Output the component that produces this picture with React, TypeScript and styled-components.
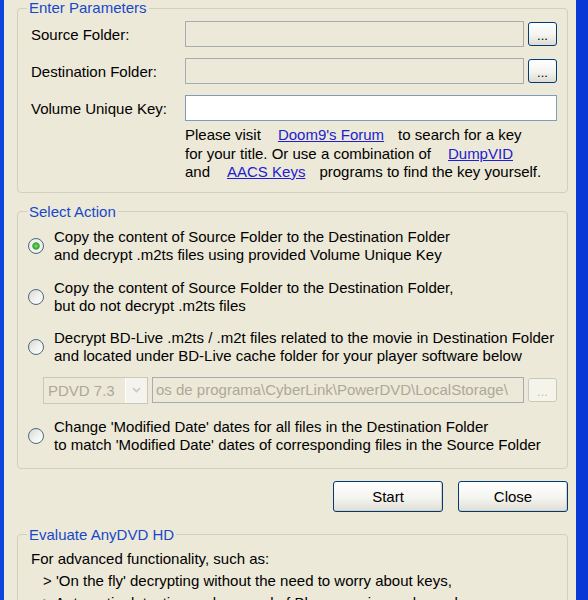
import React from 'react';
import styled, { createGlobalStyle } from 'styled-components';

const GlobalStyle = createGlobalStyle`
  html, body {
    margin: 0;
    padding: 0;
  }
  body {
    font-family: 'Liberation Sans', Arial, sans-serif;
    font-size: 15px;
    color: #000;
    overflow: hidden;
  }
`;

const Frame = styled.div`
  width: 588px;
  height: 600px;
  box-sizing: border-box;
  border-left: 4px solid #0b45de;
  border-right: 12px solid #0839d6;
  background: #ece9d8;
  overflow: hidden;
  padding: 0 8px 0 13px;
`;

const Group = styled.fieldset<{ $top?: number; $bottom?: number }>`
  margin: ${(p) => p.$top ?? 0}px 0 0;
  padding: 5px 10px ${(p) => p.$bottom ?? 10}px 13px;
  border: 1px solid #d0d0bf;
  border-radius: 4px;
  min-width: 0;
`;

const Legend = styled.legend`
  color: #1848c8;
  padding: 0 2px;
  margin-left: -4px;
  line-height: 16px;
`;

const FieldRow = styled.div`
  display: flex;
  align-items: center;
  height: 26px;

  & + & {
    margin-top: 11px;
  }
`;

const FieldLabel = styled.span`
  width: 154px;
  flex: none;
`;

const TextBox = styled.div<{ $disabled?: boolean }>`
  flex: 1;
  height: 26px;
  box-sizing: border-box;
  border: 1px solid ${(p) => (p.$disabled ? '#a5acb2' : '#7f9db9')};
  background: ${(p) => (p.$disabled ? '#ece9d8' : '#fff')};
  color: #aca899;
  padding: 0 3px;
  line-height: 24px;
  white-space: nowrap;
  overflow: hidden;
`;

const SmallButton = styled.button<{ $disabled?: boolean }>`
  width: 29px;
  height: 24px;
  margin-left: 4px;
  flex: none;
  padding: 0;
  font: inherit;
  font-size: 13px;
  line-height: 26px;
  color: ${(p) => (p.$disabled ? '#c0bdb0' : '#000')};
  border: 1px solid ${(p) => (p.$disabled ? '#cac8bb' : '#003c74')};
  border-radius: 3px;
  background: ${(p) =>
    p.$disabled ? '#f5f4ea' : 'linear-gradient(#fff 0%, #f3f3ef 55%, #dedcd2 100%)'};
`;

const Info = styled.div`
  margin: 5px 0 0 154px;
  line-height: 18.5px;
  white-space: nowrap;
`;

const Link = styled.a`
  color: #1c20d0;
  text-decoration: underline;
  margin: 0 14px 0 17px;
`;

const Option = styled.label<{ $gap?: number }>`
  display: flex;
  align-items: center;
  margin-left: -3px;
  line-height: 18px;
  margin-top: ${(p) => p.$gap ?? 0}px;
  white-space: nowrap;
`;

// XP style radio: bluish ring, soft fill, green dot when picked
const Radio = styled.span<{ $checked?: boolean }>`
  width: 16px;
  height: 16px;
  box-sizing: border-box;
  flex: none;
  margin-right: 10px;
  border-radius: 50%;
  border: 1.5px solid #4d6985;
  background: ${(p) =>
    p.$checked
      ? 'radial-gradient(circle, #7ee07a 0, #2ca52a 3.2px, #f6f6f2 4.2px, #e2e0d8 100%)'
      : 'linear-gradient(135deg, #d8d8d2 0%, #f2f2ee 55%, #fff 100%)'};
`;

const CacheRow = styled.div`
  display: flex;
  align-items: center;
  height: 27px;
  margin-top: 12px;
  padding-left: 12px;
`;

const Combo = styled.div`
  width: 105px;
  height: 27px;
  box-sizing: border-box;
  flex: none;
  display: flex;
  border: 1px solid #cac8bb;
  background: #ece9d8;
  color: #aca899;
  margin-right: 4px;
`;

const ComboText = styled.span`
  flex: 1;
  padding-left: 4px;
  line-height: 25px;
`;

const DropButton = styled.span`
  width: 21px;
  display: flex;
  align-items: center;
  justify-content: center;
  background: #f4f3ee;
  border-left: 1px solid #fff;
`;

const ButtonRow = styled.div`
  display: flex;
  justify-content: flex-end;
  gap: 15px;
  margin-top: 12px;
`;

const PushButton = styled.button`
  width: 110px;
  height: 31px;
  padding: 0;
  font: inherit;
  color: #000;
  border: 1px solid #003c74;
  border-radius: 3px;
  background: linear-gradient(#fff 0%, #f4f4f0 55%, #e0ded5 100%);
  box-shadow: inset -1px -1px 0 #d6d0c5;
`;

const Blurb = styled.div`
  line-height: 22px;
  white-space: nowrap;
`;

const Bullet = styled.div`
  padding-left: 12px;
`;

const App: React.FC = () => {
  return (
    <>
      <GlobalStyle />
      <Frame>
        <Group>
          <Legend>Enter Parameters</Legend>
          <FieldRow>
            <FieldLabel>Source Folder:</FieldLabel>
            <TextBox $disabled />
            <SmallButton>...</SmallButton>
          </FieldRow>
          <FieldRow>
            <FieldLabel>Destination Folder:</FieldLabel>
            <TextBox $disabled />
            <SmallButton>...</SmallButton>
          </FieldRow>
          <FieldRow>
            <FieldLabel>Volume Unique Key:</FieldLabel>
            <TextBox />
          </FieldRow>
          <Info>
            <div>
              Please visit<Link>Doom9's Forum</Link>to search for a key
            </div>
            <div>
              for your title. Or use a combination of<Link>DumpVID</Link>
            </div>
            <div>
              and<Link>AACS Keys</Link>programs to find the key yourself.
            </div>
          </Info>
        </Group>

        <Group $top={11} $bottom={14}>
          <Legend>Select Action</Legend>
          <Option $gap={3}>
            <Radio $checked />
            <div>
              Copy the content of Source Folder to the Destination Folder
              <br />
              and decrypt .m2ts files using provided Volume Unique Key
            </div>
          </Option>
          <Option $gap={15}>
            <Radio />
            <div>
              Copy the content of Source Folder to the Destination Folder,
              <br />
              but do not decrypt .m2ts files
            </div>
          </Option>
          <Option $gap={14}>
            <Radio />
            <div>
              Decrypt BD-Live .m2ts / .m2t files related to the movie in Destination Folder
              <br />
              and located under BD-Live cache folder for your player software below
            </div>
          </Option>
          <CacheRow>
            <Combo>
              <ComboText>PDVD 7.3</ComboText>
              <DropButton>
                <svg width="9" height="6" viewBox="0 0 9 6">
                  <polyline points="1,1 4.5,4.5 8,1" fill="none" stroke="#c9c7ba" strokeWidth="1.6" />
                </svg>
              </DropButton>
            </Combo>
            <TextBox $disabled>os de programa\CyberLink\PowerDVD\LocalStorage\</TextBox>
            <SmallButton $disabled>...</SmallButton>
          </CacheRow>
          <Option $gap={14}>
            <Radio />
            <div>
              Change 'Modified Date' dates for all files in the Destination Folder
              <br />
              to match 'Modified Date' dates of corresponding files in the Source Folder
            </div>
          </Option>
        </Group>

        <ButtonRow>
          <PushButton>Start</PushButton>
          <PushButton>Close</PushButton>
        </ButtonRow>

        <Group $top={15}>
          <Legend>Evaluate AnyDVD HD</Legend>
          <Blurb>
            <div>For advanced functionality, such as:</div>
            <Bullet>&gt; 'On the fly' decrypting without the need to worry about keys,</Bullet>
            <Bullet>&gt; Automatic detection and removal of Blu-ray region code, and</Bullet>
          </Blurb>
        </Group>
      </Frame>
    </>
  );
};

export default App;
